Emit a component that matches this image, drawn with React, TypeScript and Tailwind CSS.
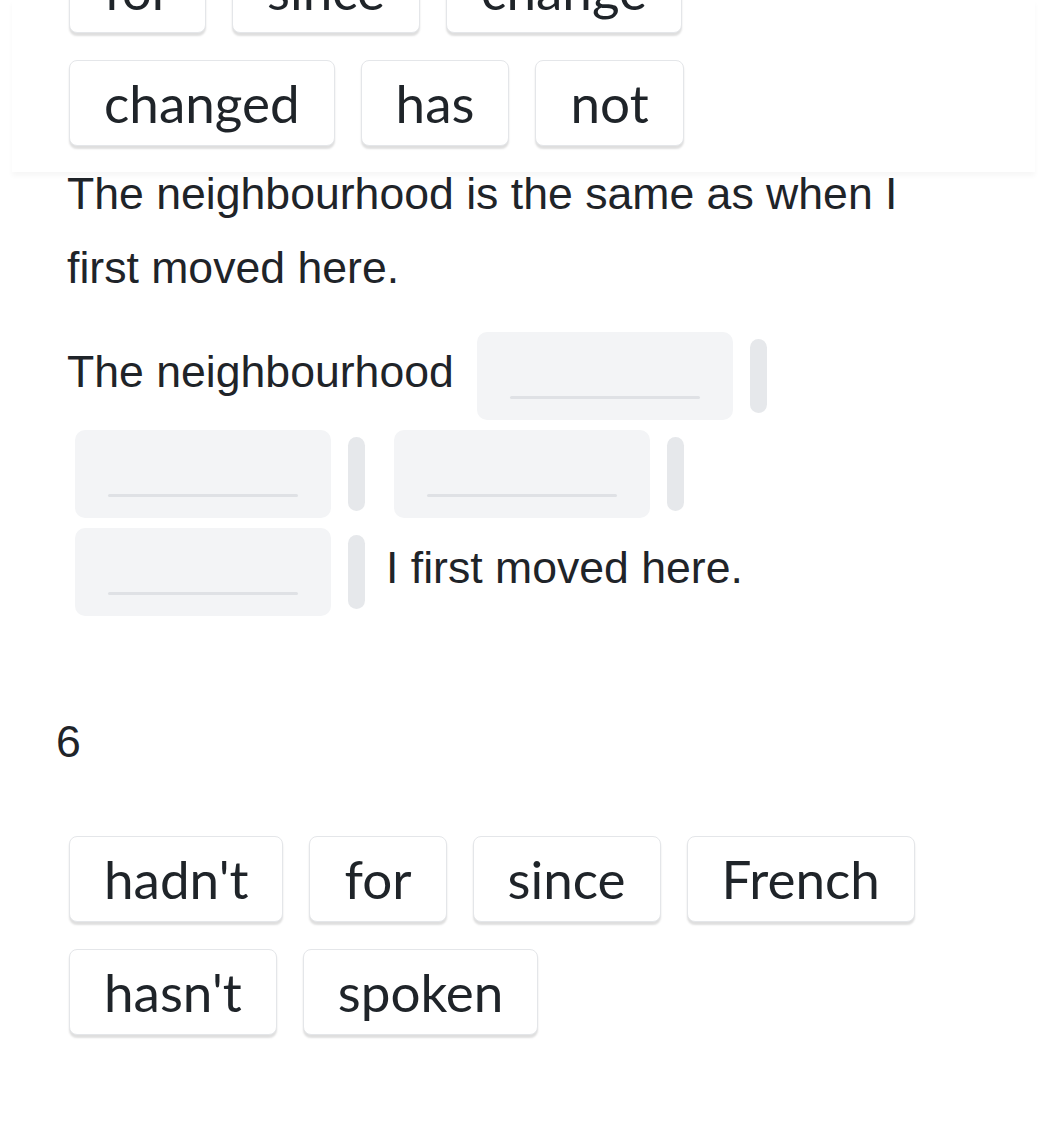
import React from "react";

const Chip = ({ w }: { w: string }) => (
  <div className="h-[86px] px-[34px] flex items-center rounded-[8px] border border-[#e4e6e9] bg-white shadow-[0_3px_2px_rgba(0,0,0,0.13)] font-['Lato',sans-serif] text-[53px] text-[#1f2429] leading-none whitespace-nowrap">
    <span className="-mt-[2px]">{w}</span>
  </div>
);

const Blank = () => (
  <div className="flex items-center">
    <div className="ml-[8px] mr-[8px] my-[5px] h-[88px] w-[256px] rounded-[10px] bg-[#f3f4f6] px-[33px] pb-[21px] flex items-end">
      <div className="h-[3px] w-full rounded-full bg-[#dfe1e5]" />
    </div>
    <div className="ml-[9px] mr-[21px] h-[74px] w-[17px] rounded-full bg-[#e6e8eb]" />
  </div>
);

export default function App() {
  const top = ["for", "since", "change", "changed", "has", "not"];
  const bottom = ["hadn't", "for", "since", "French", "hasn't", "spoken"];
  return (
    <div className="relative min-h-screen bg-white font-['Liberation_Sans',Arial,sans-serif] text-[#1f2429]">
      <div className="absolute top-0 left-[12px] right-[12px] h-[172px] bg-white z-10 overflow-hidden shadow-[0_4px_5px_rgba(0,0,0,0.035)]">
        <div className="-mt-[53px] ml-[57px] w-[880px] flex flex-wrap gap-x-[26px] gap-y-[27px]">
          {top.map((w, i) => (
            <Chip key={i} w={w} />
          ))}
        </div>
      </div>

      <div className="pt-[157px] px-[67px] pb-[80px]">
        <p className="max-w-[860px] text-[44.6px] leading-[74px]">
          The neighbourhood is the same as when I first moved here.
        </p>

        <div className="mt-[22px] flex flex-wrap items-center text-[44.6px] leading-[74px] w-[913px]">
          <span className="mr-[15px] mb-[8px]">The neighbourhood</span>
          <Blank />
          <Blank />
          <Blank />
          <Blank />
          <span className="mb-[8px]">I first moved here.</span>
        </div>

        <div className="mt-[84px] -ml-[11px] text-[44.6px] leading-[74px]">6</div>

        <div className="mt-[57px] ml-[2px] flex flex-wrap gap-x-[26px] gap-y-[27px] w-[880px]">
          {bottom.map((w, i) => (
            <Chip key={i} w={w} />
          ))}
        </div>
      </div>
    </div>
  );
}
